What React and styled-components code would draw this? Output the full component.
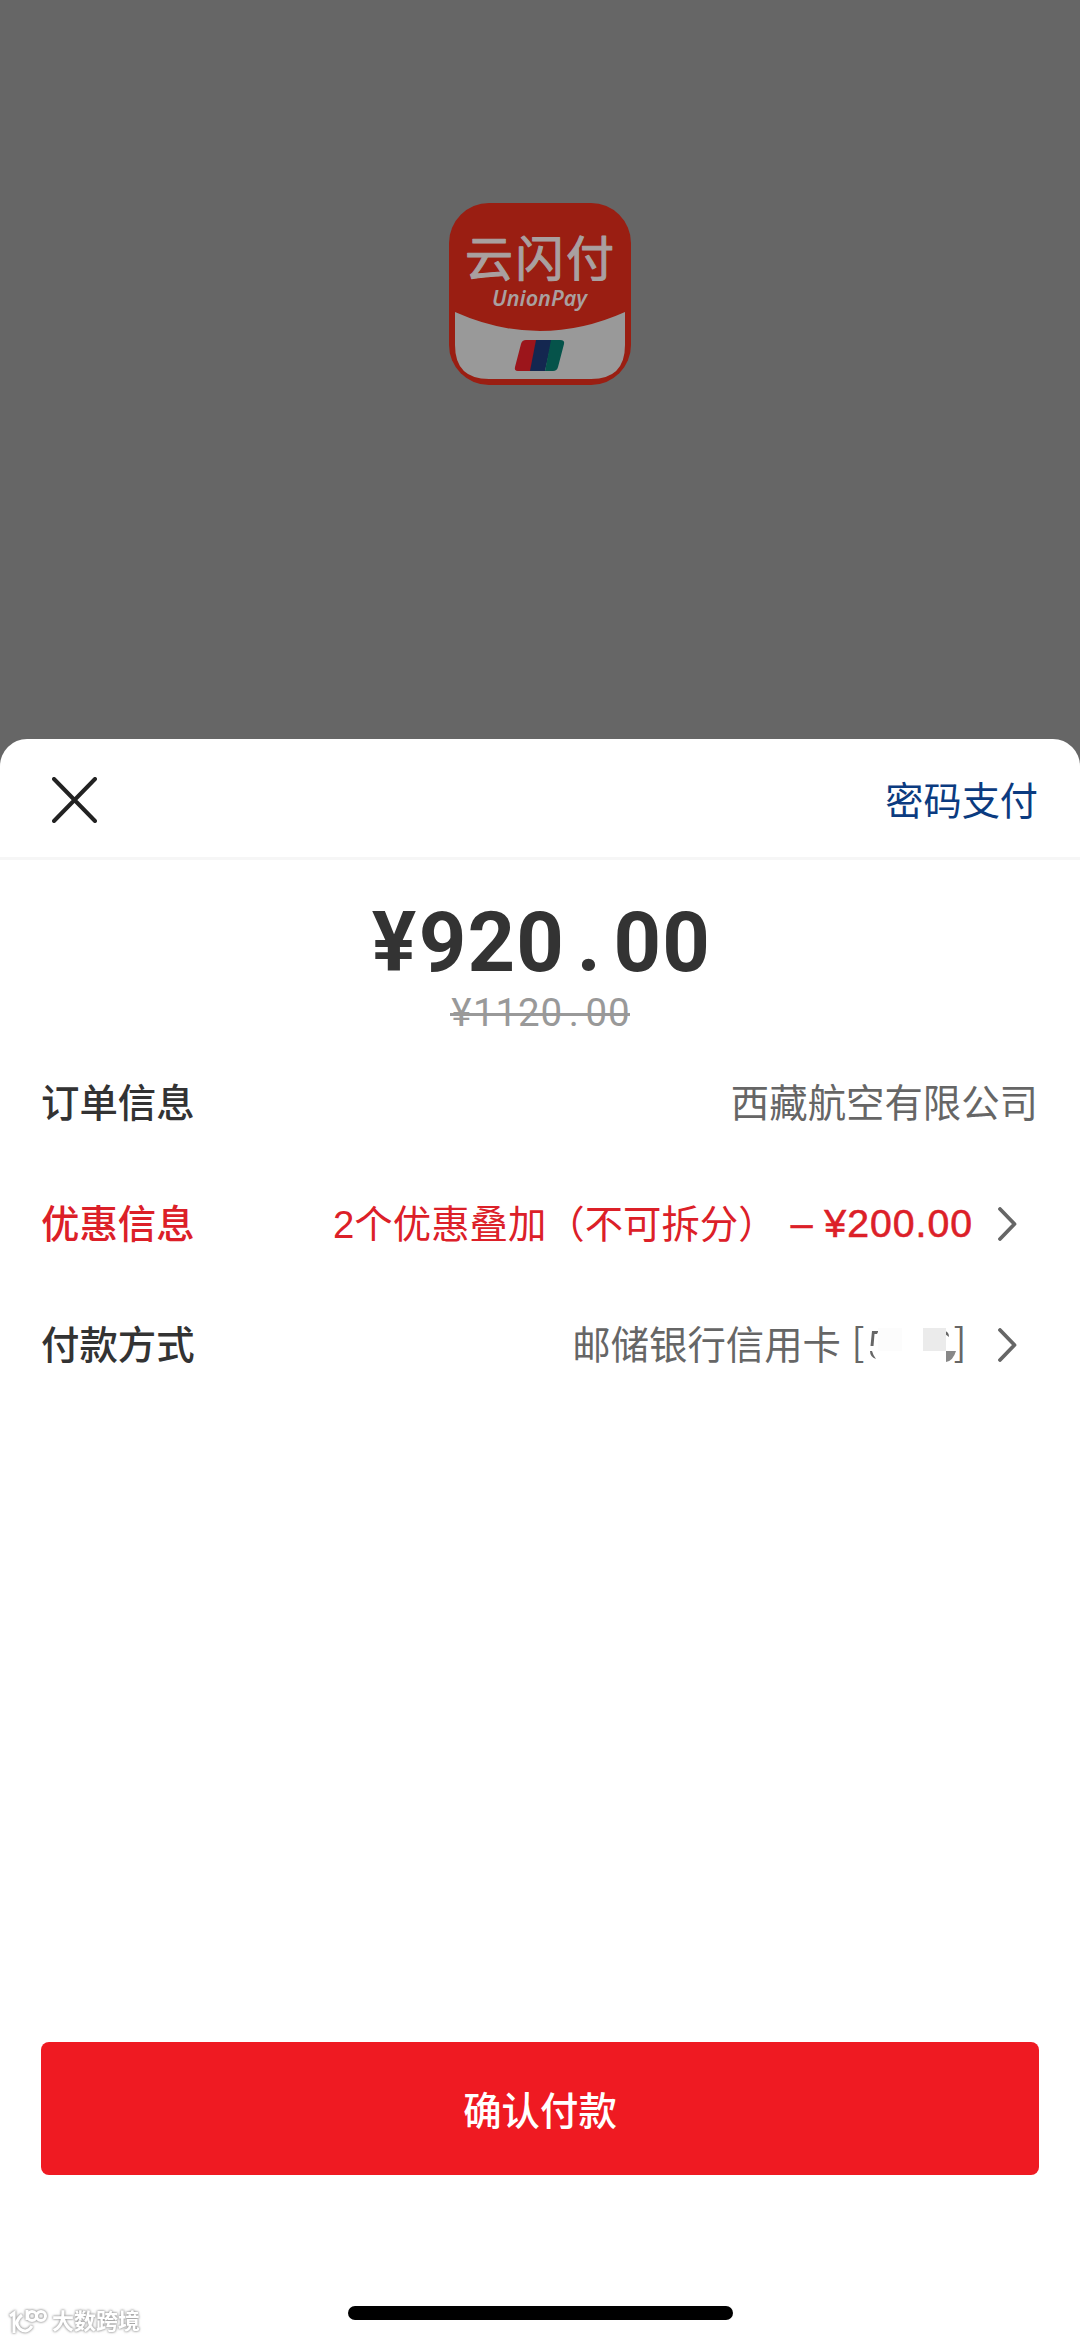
import React from 'react';
import styled, { createGlobalStyle } from 'styled-components';

const GlobalStyle = createGlobalStyle`
  * {
    box-sizing: border-box;
  }

  body {
    margin: 0;
    background: #666;
    font-family: 'Liberation Sans', 'Noto Sans CJK SC', sans-serif;
  }
`

const Screen = styled.div`
  width: 1080px;
  height: 2341px;
  display: flex;
  flex-direction: column;
  background: #666;
  overflow: hidden;
`

const Backdrop = styled.div`
  height: 739px;
  flex-shrink: 0;
  padding-top: 203px;
  display: flex;
  justify-content: center;
  align-items: flex-start;
`

const Sheet = styled.main`
  position: relative;
  flex-grow: 1;
  display: flex;
  flex-direction: column;
  background: #fff;
  border-radius: 27px 27px 0 0;
`

const Header = styled.header`
  height: 121px;
  padding: 4px 42px 1px 52px;
  display: flex;
  align-items: center;
  justify-content: space-between;
  border-bottom: 3px solid #f6f6f6;
`

const IconButton = styled.button`
  display: flex;
  padding: 0;
  border: 0;
  background: transparent;
  cursor: pointer;
`

const PasswordLink = styled.a`
  padding-top: 5px;
  color: #0b3b80;
  font-size: 38.2px;
  line-height: 56px;
`

const Prices = styled.section`
  height: 183px;
  padding-top: 36px;
  display: flex;
  flex-direction: column;
  align-items: center;
  font-family: Roboto, sans-serif;
`

const Amount = styled.div`
  display: flex;
  color: #333;
  font-size: ${props => props.$size}px;
  font-weight: ${props => props.$weight};
  line-height: ${props => props.$line}px;

  span {
    width: ${props => props.$cell}px;
    text-align: center;
  }
`

const Original = styled(Amount)`
  position: relative;
  color: #999;

  &::after {
    content: '';
    position: absolute;
    left: 0;
    right: 0;
    top: 23px;
    height: 3px;
    background: #999;
  }
`

const Row = styled.div`
  height: 121px;
  padding: 0 42px 0 41px;
  display: flex;
  align-items: center;
  color: ${props => props.$color || '#666'};
  font-size: 38.4px;
  line-height: 56px;
  white-space: pre;
`

const Label = styled.span`
  flex-grow: 1;
  color: ${props => props.$color || '#333'};
  font-weight: 500;
`

const Discount = styled.span`
  margin-left: 14px;
  padding-bottom: 2px;
  font-size: 39.2px;
  letter-spacing: 1px;
  word-spacing: -1px;
  -webkit-text-stroke: 0.6px currentColor;
`

const Arrow = styled.svg`
  margin: 0 21px 2px 25px;
`

const Hidden = styled.svg`
  margin: 0 0 2px 5px;
`

const Footer = styled.footer`
  margin-top: auto;
  height: 299px;
  padding: 0 41px;
  display: flex;
  flex-direction: column;
  align-items: center;
`

const PayButton = styled.button`
  width: 100%;
  height: 133px;
  padding: 0 0 2px;
  border: 0;
  border-radius: 8px;
  background: #ef1a22;
  color: #fff;
  font-family: inherit;
  font-size: 38.4px;
  font-weight: 500;
`

const HomeBar = styled.div`
  width: 385px;
  height: 14px;
  margin-top: 131px;
  border-radius: 7px;
  background: #000;
`

const Watermark = styled.div`
  position: absolute;
  left: 8px;
  bottom: 4px;
  display: flex;
  align-items: center;
  gap: 5px;
  color: #fff;
  font-size: 22px;
  font-weight: 700;
  line-height: 30px;
  filter: drop-shadow(0 0 1px #999) drop-shadow(0 0 1px #bbb);
`

const AppLogo = () => (
    <svg width="182" height="182" viewBox="0 0 182 182">
        <rect width="182" height="182" rx="40" fill="#9a1e12"/>
        <path d="M6 109 Q91 147 176 109 V142 Q176 176 142 176 H40 Q6 176 6 142 Z" fill="#999"/>
        <text x="16" y="73" textLength="149" fill="#a9a0a0" stroke="#a9a0a0" strokeWidth="1" strokeLinejoin="round" fontFamily="'Liberation Sans', 'Noto Sans CJK SC', sans-serif" fontSize="48" fontWeight="400">云闪付</text>
        <text x="43" y="103" textLength="95" lengthAdjust="spacingAndGlyphs" fill="#a9a0a0" fontFamily="'Noto Sans', sans-serif" fontSize="22" fontStyle="italic" fontWeight="600">UnionPay</text>
        <path d="M77 137 H90 L82 168 H69 Q65 168 66 164 L72 141 Q73 137 77 137 Z" fill="#9c151b"/>
        <path d="M87 137 H103 L96 168 H81 Z" fill="#142750"/>
        <path d="M102 137 H111 Q116 137 115 141 L109 164 Q108 168 104 168 H96 Z" fill="#05534a"/>
    </svg>
);

const CloseIcon = () => (
    <svg width="45" height="46" viewBox="0 0 45 46" fill="none" stroke="#222" strokeWidth="4" strokeLinecap="round">
        <path d="M2 2 L43 44 M43 2 L2 44"/>
    </svg>
);

const ArrowIcon = () => (
    <Arrow width="19" height="34" viewBox="0 0 19 34" fill="none" stroke="#666" strokeWidth="3.8" strokeLinecap="round" strokeLinejoin="round">
        <path d="M2 2 L16.5 17 L2 32"/>
    </Arrow>
);

// card digits are covered, only their edges stay visible
const CardNumber = () => (
    <Hidden width="127" height="68" viewBox="0 -6 127 68" fontFamily="'Noto Sans CJK SC', sans-serif" fontSize="38.4" fill="#666">
        <text x="5.5" y="39">[</text>
        <text x="107.5" y="39">]</text>
        <path d="M26 14 h6.5 l-1.5 3 h-2.5 l-1 12 h-3 Z M24 34 h2 q1 4 4 8 q-6 -2 -6 -8 Z"/>
        <path d="M99 14 q4 1 4 6 l-4 -3 Z"/>
        <path d="M32 11 h24 v23 h-24 Z" fill="#fcfcfc"/>
        <path d="M77 11 h23 v23 h-23 Z" fill="#ebebeb"/>
        <path d="M100 34 h10 q-3 10 -10 11 Z" fill="#888"/>
    </Hidden>
);

const cells = text => text.split('').map((c, i) => <span key={i}>{c}</span>);

const App = () => (
    <Screen>
        <GlobalStyle/>
        <Backdrop><AppLogo/></Backdrop>
        <Sheet>
            <Header>
                <IconButton aria-label="关闭"><CloseIcon/></IconButton>
                <PasswordLink>密码支付</PasswordLink>
            </Header>
            <Prices>
                <Amount $size={83} $weight={700} $line={94} $cell={48.7}>{cells('¥920.00')}</Amount>
                <Original $size={38.5} $weight={400} $line={46} $cell={22.5}>{cells('¥1120.00')}</Original>
            </Prices>
            <Row>
                <Label>订单信息</Label>
                西藏航空有限公司
            </Row>
            <Row $color="#dc2028">
                <Label $color="#dc2028">优惠信息</Label>
                2个优惠叠加（不可拆分）
                <Discount>– ¥200.00</Discount>
                <ArrowIcon/>
            </Row>
            <Row>
                <Label>付款方式</Label>
                邮储银行信用卡
                <CardNumber/>
                <ArrowIcon/>
            </Row>
            <Footer>
                <PayButton>确认付款</PayButton>
                <HomeBar/>
            </Footer>
            <Watermark>
                <svg width="39" height="28" viewBox="0 0 39 28" fill="none" stroke="#fff" strokeWidth="3">
                    <path d="M2 8 L6 5 V25 M14 7 Q5 14 12 21 Q19 26 24 18"/>
                    <path d="M19 2 V12"/>
                    <circle cx="24" cy="8" r="4.5"/>
                    <circle cx="33" cy="8" r="4.5"/>
                </svg>
                大数跨境
            </Watermark>
        </Sheet>
    </Screen>
);

export default App;
